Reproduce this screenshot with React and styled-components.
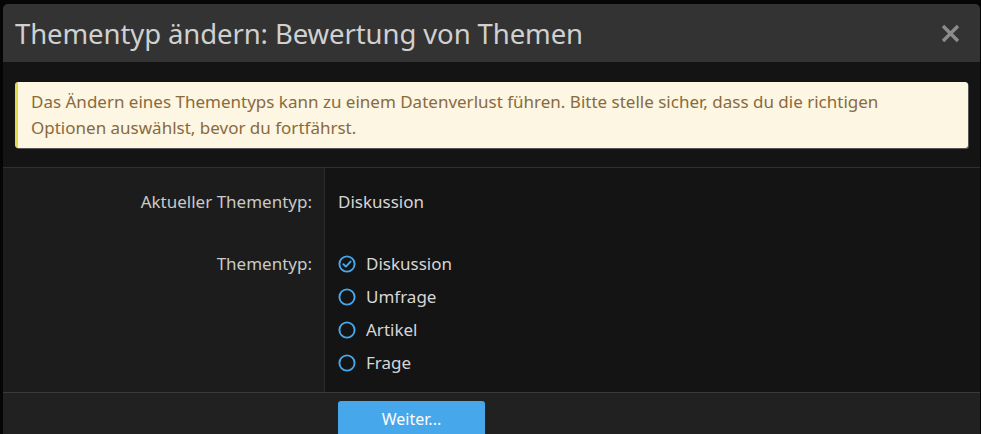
import React from "react";
import styled, { createGlobalStyle } from "styled-components";

const GlobalStyle = createGlobalStyle`
  html, body {
    margin: 0;
    padding: 0;
    background: #050505;
    height: 100%;
    overflow: hidden;
  }
  body {
    font-family: "Noto Sans", "Open Sans", sans-serif;
  }
`;

const Backdrop = styled.div`
  padding: 4px 0 0 3px;
  height: 434px;
  box-sizing: border-box;
  overflow: hidden;
`;

const Modal = styled.div`
  width: 977px;
  background: #141414;
  border-radius: 5px 5px 0 0;
  overflow: hidden;
`;

const Header = styled.div`
  display: flex;
  align-items: center;
  justify-content: space-between;
  height: 58px;
  padding: 0 20px 0 12px;
  background: #333333;
`;

const Title = styled.h2`
  margin: 0;
  font-size: 27.5px;
  font-weight: 400;
  color: #d0d0d0;
  letter-spacing: -0.1px;
`;

const CloseButton = styled.button`
  display: flex;
  padding: 0;
  border: 0;
  background: none;
  cursor: pointer;
`;

const Body = styled.div`
  padding: 20px 12px 19px 12px;
  border-bottom: 1px solid #303030;
`;

const Notice = styled.div`
  padding: 7px 13px;
  background: #fcf6e3;
  color: #8a6a3c;
  border-left: 3px solid #e2d94c;
  border-radius: 3px;
  box-shadow: 1px 1px 0 #555;
  font-size: 17px;
  line-height: 26px;
`;

const Row = styled.div`
  display: grid;
  grid-template-columns: 322px 1fr;
`;

const Label = styled.div`
  background: #1c1c1c;
  border-right: 1px solid #2c2c2c;
  padding: ${(p) => p.$pad};
  padding-right: 12px;
  text-align: right;
  font-size: 17px;
  line-height: 24px;
  color: #c9c9c9;
`;

const Value = styled.div`
  padding: ${(p) => p.$pad};
  padding-left: 13px;
  font-size: 17px;
  line-height: 24px;
  color: #d6d6d6;
`;

const Options = styled.ul`
  margin: 0;
  padding: 0;
  list-style: none;
  display: flex;
  flex-direction: column;
  gap: 9px;
`;

const Option = styled.li`
  display: flex;
  align-items: center;
  gap: 10px;
  font-size: 17px;
  line-height: 24px;
  color: #d6d6d6;
`;

const Footer = styled.div`
  display: grid;
  grid-template-columns: 335px 1fr;
  padding: 8px 0 0;
  height: 60px;
  background: #212121;
  border-top: 1px solid #3a3a3a;
`;

const Button = styled.button`
  grid-column: 2;
  width: 147px;
  height: 36px;
  border: 0;
  border-radius: 3px;
  background: #47a7eb;
  color: #fdfdfd;
  font-family: inherit;
  font-size: 16px;
`;

function RadioIcon({ checked }) {
  return (
    <svg width="18" height="18" viewBox="0 0 18 18" fill="none">
      <circle cx="9" cy="9" r="7.6" stroke="#47a7eb" strokeWidth="1.9" />
      {checked && (
        <path
          d="M5.4 9.2 L7.9 11.6 L12.6 6.6"
          stroke="#47a7eb"
          strokeWidth="1.9"
          strokeLinecap="round"
          strokeLinejoin="round"
        />
      )}
    </svg>
  );
}

const types = ["Diskussion", "Umfrage", "Artikel", "Frage"];

export default function App() {
  return (
    <>
      <GlobalStyle />
      <Backdrop>
        <Modal>
          <Header>
            <Title>Thementyp ändern: Bewertung von Themen</Title>
            <CloseButton aria-label="Schließen">
              <svg width="19" height="19" viewBox="0 0 19 19">
                <path
                  d="M2 2 L17 17 M17 2 L2 17"
                  stroke="#8c8c8c"
                  strokeWidth="3.4"
                />
              </svg>
            </CloseButton>
          </Header>
          <Body>
            <Notice>
              Das Ändern eines Thementyps kann zu einem Datenverlust führen.
              Bitte stelle sicher, dass du die richtigen Optionen auswählst,
              bevor du fortfährst.
            </Notice>
          </Body>
          <Row>
            <Label $pad="22px 0 18px">Aktueller Thementyp:</Label>
            <Value $pad="22px 0 18px">Diskussion</Value>
          </Row>
          <Row>
            <Label $pad="20px 0 17px">Thementyp:</Label>
            <Value $pad="20px 0 17px">
              <Options>
                {types.map((t, i) => (
                  <Option key={t}>
                    <RadioIcon checked={i === 0} />
                    {t}
                  </Option>
                ))}
              </Options>
            </Value>
          </Row>
          <Footer>
            <Button>Weiter...</Button>
          </Footer>
        </Modal>
      </Backdrop>
    </>
  );
}
